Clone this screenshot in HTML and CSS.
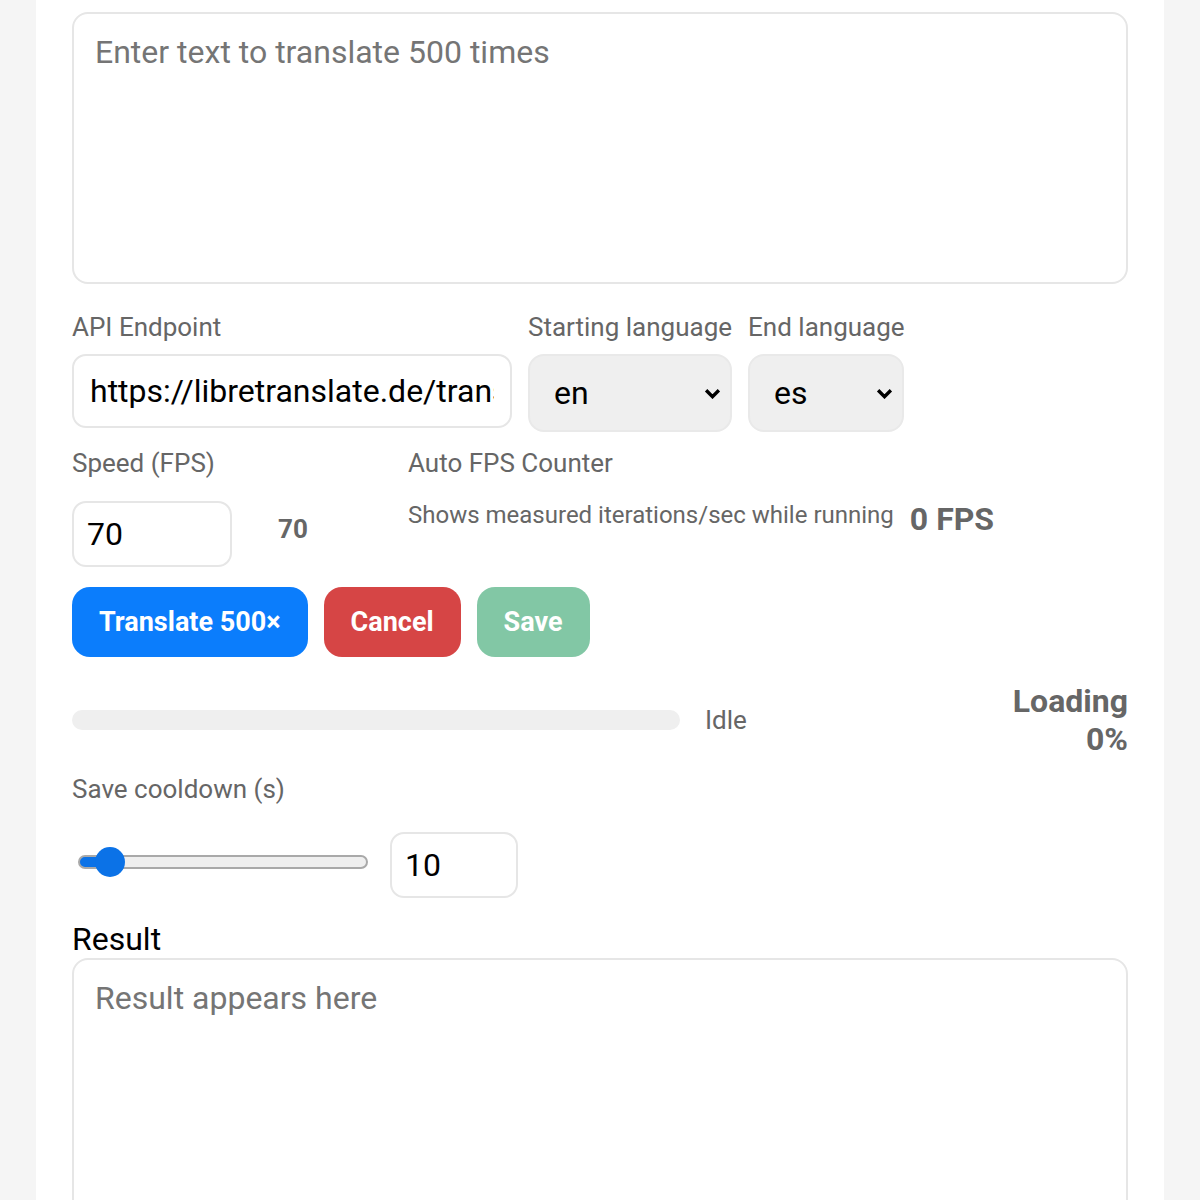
FILE: index.html
```html
<!DOCTYPE html>
<html lang="en">

<head>
  <meta charset="UTF-8">
  <meta name="viewport" content="width=device-width, initial-scale=1">
  <title>Translate 500×</title>
  <link rel="stylesheet" href="styles.css">
</head>

<body>
  <main class="card">
    <textarea class="source" id="source" placeholder="Enter text to translate 500 times"></textarea>

    <!-- Endpoint and language pair -->
    <div class="settings">
      <label class="field">
        <span class="label">API Endpoint</span>
        <input class="endpoint" type="text" id="endpoint" value="https://libretranslate.de/translate">
      </label>
      <label class="field">
        <span class="label">Starting language</span>
        <select class="lang lang-from" id="fromLang">
          <option selected>en</option>
          <option>de</option>
          <option>fr</option>
        </select>
      </label>
      <label class="field">
        <span class="label">End language</span>
        <select class="lang lang-to" id="toLang">
          <option selected>es</option>
          <option>it</option>
          <option>ja</option>
        </select>
      </label>
    </div>

    <!-- Speed and measured fps -->
    <div class="speed-row">
      <div class="speed">
        <span class="label">Speed (FPS)</span>
        <div class="speed-controls">
          <input class="num num-speed" type="number" id="speed" value="70">
          <span class="speed-value" id="speedValue">70</span>
        </div>
      </div>
      <div class="fps">
        <span class="label">Auto FPS Counter</span>
        <div class="fps-line">
          <span class="hint">Shows measured iterations/sec while running</span>
          <strong class="fps-value" id="fpsValue">0 FPS</strong>
        </div>
      </div>
    </div>

    <div class="actions">
      <button class="btn btn-primary" id="start">Translate 500×</button>
      <button class="btn btn-danger" id="cancel">Cancel</button>
      <button class="btn btn-save" id="save" disabled>Save</button>
    </div>

    <div class="progress-row">
      <div class="progress">
        <div class="progress-fill" style="width: 0%"></div>
      </div>
      <span class="status" id="status">Idle</span>
      <div class="loading" id="loading">Loading<br>0%</div>
    </div>

    <div class="cooldown">
      <span class="label">Save cooldown (s)</span>
      <div class="cooldown-controls">
        <input class="slider" type="range" id="cooldownRange" min="5" max="90" value="10" style="--fill: 11%">
        <input class="num num-cooldown" type="number" id="cooldown" value="10">
      </div>
    </div>

    <h2 class="result-title">Result</h2>
    <textarea class="result" id="result" placeholder="Result appears here" readonly></textarea>
  </main>
</body>

</html>
```

FILE: styles.css
```css
* {
  margin: 0;
  padding: 0;
  box-sizing: border-box;
}

body {
  font-family: Roboto, "Noto Sans", sans-serif;
  background: #f5f5f5;
  color: #000;
}

.card {
  width: 1128px;
  margin: 0 auto;
  background: #fff;
  padding: 12px 36px 40px;
}

textarea,
input,
select,
button {
  font-family: inherit;
}

.source,
.result {
  display: block;
  width: 100%;
  height: 272px;
  padding: 19px 21px;
  font-size: 32px;
  border: 2px solid #e6e6e6;
  border-radius: 16px;
  resize: none;
  color: #000;
  background: #fff;
}

.source::placeholder,
.result::placeholder {
  color: #757575;
}

.label {
  display: block;
  font-size: 26px;
  color: #666;
}

/* endpoint + languages */
.settings {
  display: flex;
  align-items: flex-start;
  gap: 16px;
  margin-top: 28px;
}

.field {
  display: flex;
  flex-direction: column;
  gap: 12px;
}

.endpoint {
  width: 440px;
  padding: 16px;
  font-size: 32px;
  border: 2px solid #e6e6e6;
  border-radius: 14px;
  color: #000;
  background: #fff;
}

.lang {
  appearance: none;
  -webkit-appearance: none;
  padding: 18px 24px;
  font-size: 32px;
  color: #000;
  background: #efefef url("data:image/svg+xml,%3Csvg xmlns='http://www.w3.org/2000/svg' viewBox='0 0 16 10'%3E%3Cpath d='M2 2l6 6 6-6' fill='none' stroke='%23000' stroke-width='3.2'/%3E%3C/svg%3E") no-repeat right 9px center / 17px 11px;
  border: 2px solid #e9e9e9;
  border-radius: 16px;
}

.lang-from {
  width: 204px;
}

.lang-to {
  width: 156px;
}

/* speed */
.speed-row {
  display: flex;
  gap: 16px;
  margin-top: 16px;
}

.speed {
  width: 320px;
}

.speed-controls {
  display: flex;
  align-items: center;
  gap: 46px;
  margin-top: 23px;
}

.num {
  padding: 12px 13px;
  font-size: 32px;
  border: 2px solid #e6e6e6;
  border-radius: 14px;
  color: #000;
  background: #fff;
  -moz-appearance: textfield;
}

.num::-webkit-inner-spin-button,
.num::-webkit-outer-spin-button {
  -webkit-appearance: none;
}

.num-speed {
  width: 160px;
}

.speed-value {
  font-size: 26px;
  font-weight: 700;
  color: #666;
  margin-bottom: 10px;
}

.fps-line {
  display: flex;
  align-items: center;
  gap: 16px;
  margin-top: 22px;
}

.hint {
  font-size: 24px;
  color: #666;
  margin-bottom: 8px;
}

.fps-value {
  font-size: 32px;
  font-weight: 700;
  color: #666;
}

/* buttons */
.actions {
  display: flex;
  gap: 16px;
  margin-top: 20px;
}

.btn {
  border: none;
  border-radius: 18px;
  padding: 18px 27px;
  font-size: 27px;
  line-height: 34px;
  font-weight: 700;
  color: #fff;
  cursor: pointer;
}

.btn-primary {
  background: #0b7dfc;
}

.btn-danger {
  background: #d64545;
}

.btn-save {
  background: #82c7a5;
  cursor: not-allowed;
}

/* progress */
.progress-row {
  display: flex;
  align-items: center;
  margin-top: 25px;
}

.progress {
  width: 608px;
  height: 20px;
  background: #efefef;
  border-radius: 10px;
  overflow: hidden;
}

.progress-fill {
  height: 100%;
  background: #0b7dfc;
}

.status {
  margin-left: 25px;
  font-size: 26px;
  color: #666;
}

.loading {
  margin-left: auto;
  text-align: right;
  font-size: 32px;
  font-weight: 700;
  color: #666;
}

/* cooldown */
.cooldown {
  margin-top: 16px;
}

.cooldown-controls {
  display: flex;
  align-items: center;
  gap: 22px;
  margin-top: 28px;
}

.slider {
  -webkit-appearance: none;
  appearance: none;
  width: 290px;
  height: 30px;
  margin: 0 0 6px 6px;
  background: transparent;
}

.slider::-webkit-slider-runnable-track {
  height: 14px;
  border: 2px solid #a9a9a9;
  border-radius: 7px;
  background: linear-gradient(to right, #0b72e7 var(--fill), #efefef var(--fill));
}

.slider::-webkit-slider-thumb {
  -webkit-appearance: none;
  width: 30px;
  height: 30px;
  margin-top: -10px;
  border: none;
  border-radius: 50%;
  background: #0b72e7;
}

.num-cooldown {
  width: 128px;
}

.result-title {
  margin-top: 22px;
  font-size: 32px;
  font-weight: 400;
  color: #000;
}
```
